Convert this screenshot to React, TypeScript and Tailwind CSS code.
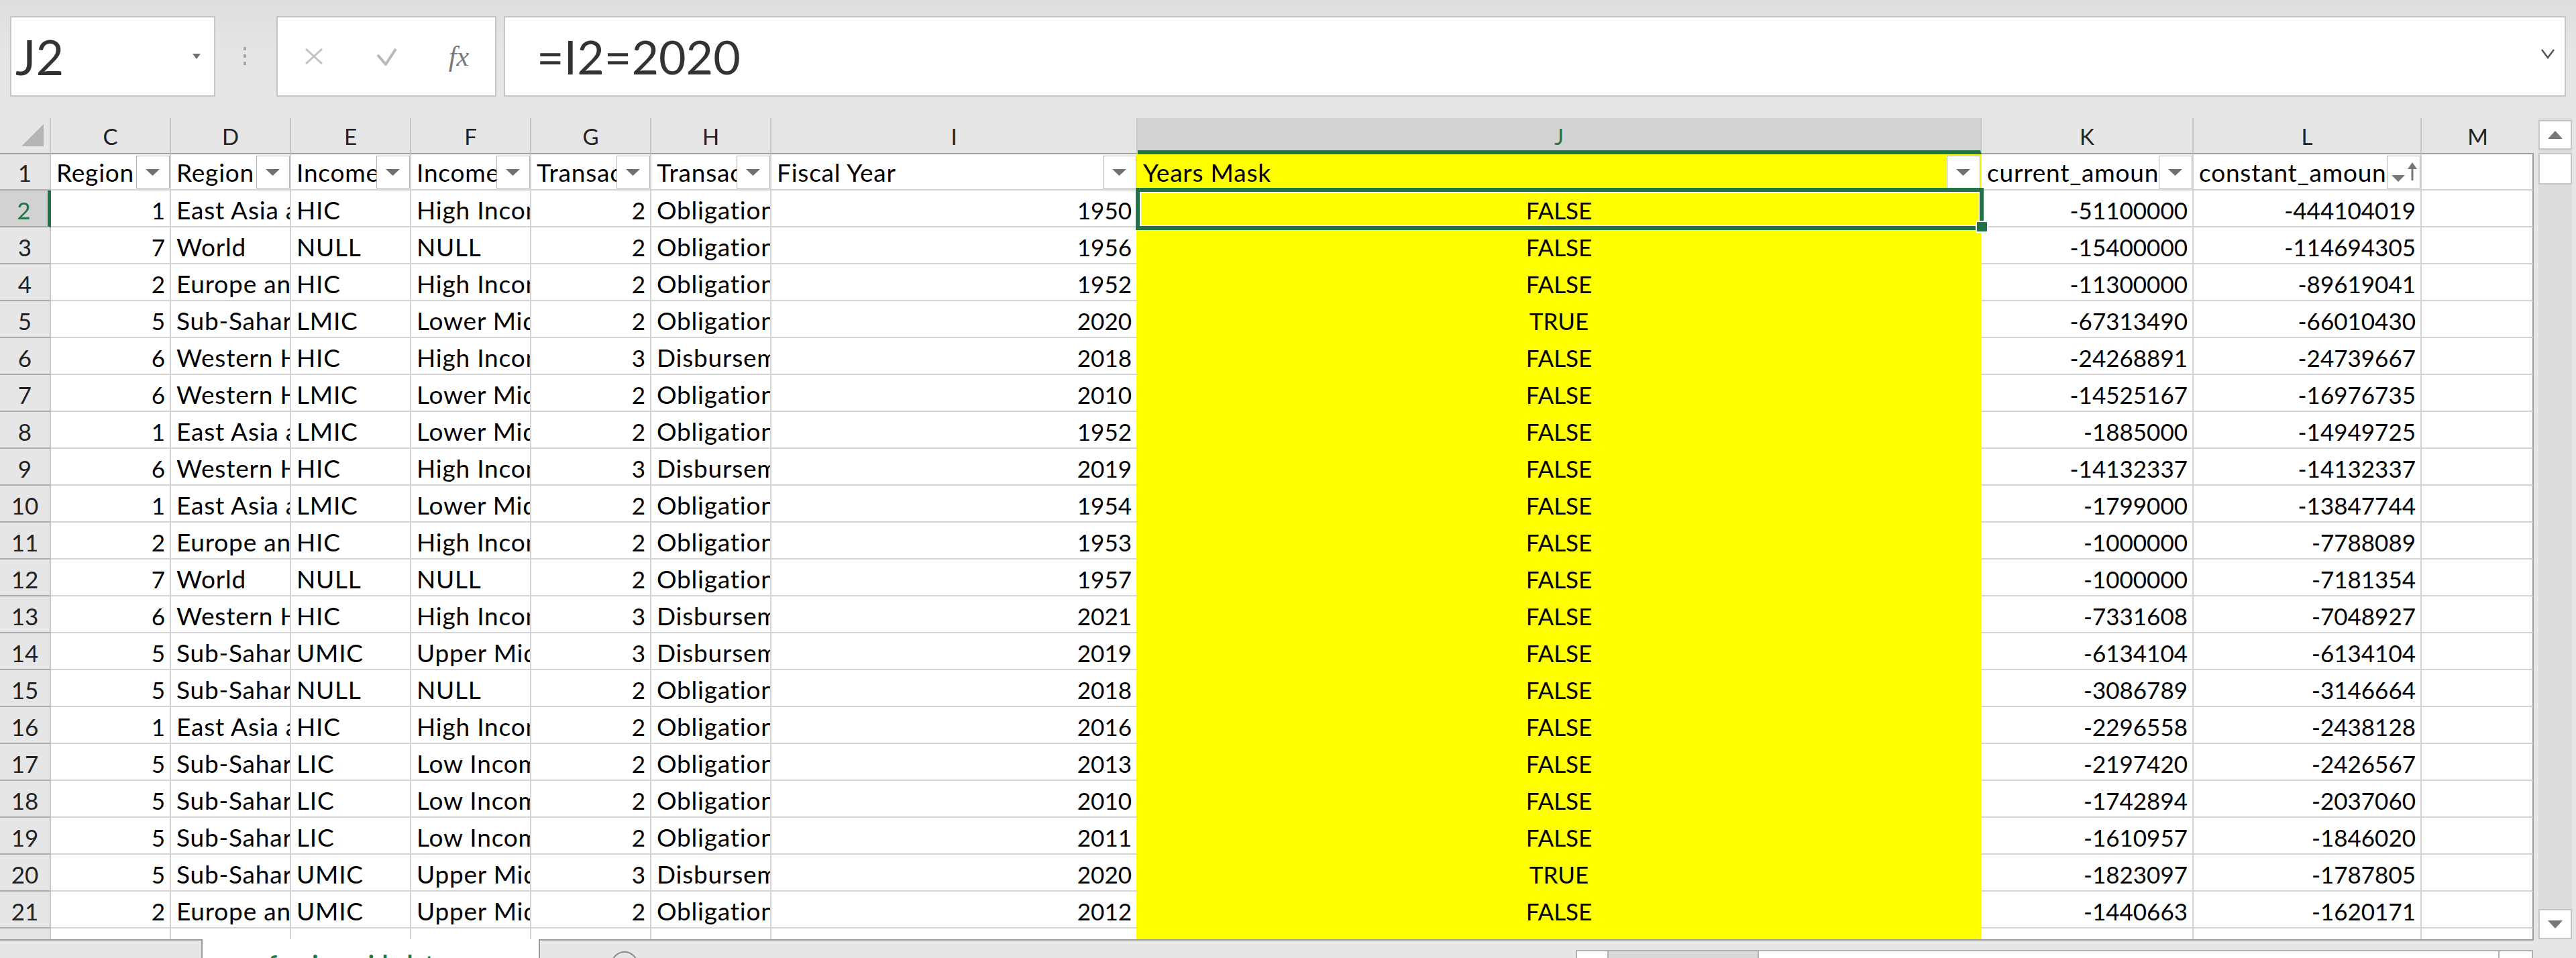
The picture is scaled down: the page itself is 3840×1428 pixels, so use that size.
import React from "react";

type Align = "left" | "right" | "center";

type Column = {
  id: string;
  w: string;
  align: Align;
  title: string;
};

const columns: Column[] = [
  { id: "C", w: "w-[179px]", align: "right", title: "Region ID" },
  { id: "D", w: "w-[179px]", align: "left", title: "Region Name" },
  { id: "E", w: "w-[179px]", align: "left", title: "Income Group Acronym" },
  { id: "F", w: "w-[179px]", align: "left", title: "Income Group Name" },
  { id: "G", w: "w-[179px]", align: "right", title: "Transaction Type ID" },
  { id: "H", w: "w-[179px]", align: "left", title: "Transaction Type Name" },
  { id: "I", w: "w-[546px]", align: "right", title: "Fiscal Year" },
  { id: "J", w: "w-[1258px]", align: "center", title: "Years Mask" },
  { id: "K", w: "w-[316px]", align: "right", title: "current_amount" },
  { id: "L", w: "w-[340px]", align: "right", title: "constant_amount" },
  { id: "M", w: "w-[167px]", align: "left", title: "" },
];

const EA = "East Asia and Pacific";
const EU = "Europe and Eurasia";
const SSA = "Sub-Saharan Africa";
const WH = "Western Hemisphere";
const OB = "Obligations";
const DI = "Disbursements";

// C..L for rows 2..22
const rows: string[][] = [
  ["1", EA, "HIC", "High Income", "2", OB, "1950", "FALSE", "-51100000", "-444104019"],
  ["7", "World", "NULL", "NULL", "2", OB, "1956", "FALSE", "-15400000", "-114694305"],
  ["2", EU, "HIC", "High Income", "2", OB, "1952", "FALSE", "-11300000", "-89619041"],
  ["5", SSA, "LMIC", "Lower Middle Income", "2", OB, "2020", "TRUE", "-67313490", "-66010430"],
  ["6", WH, "HIC", "High Income", "3", DI, "2018", "FALSE", "-24268891", "-24739667"],
  ["6", WH, "LMIC", "Lower Middle Income", "2", OB, "2010", "FALSE", "-14525167", "-16976735"],
  ["1", EA, "LMIC", "Lower Middle Income", "2", OB, "1952", "FALSE", "-1885000", "-14949725"],
  ["6", WH, "HIC", "High Income", "3", DI, "2019", "FALSE", "-14132337", "-14132337"],
  ["1", EA, "LMIC", "Lower Middle Income", "2", OB, "1954", "FALSE", "-1799000", "-13847744"],
  ["2", EU, "HIC", "High Income", "2", OB, "1953", "FALSE", "-1000000", "-7788089"],
  ["7", "World", "NULL", "NULL", "2", OB, "1957", "FALSE", "-1000000", "-7181354"],
  ["6", WH, "HIC", "High Income", "3", DI, "2021", "FALSE", "-7331608", "-7048927"],
  ["5", SSA, "UMIC", "Upper Middle Income", "3", DI, "2019", "FALSE", "-6134104", "-6134104"],
  ["5", SSA, "NULL", "NULL", "2", OB, "2018", "FALSE", "-3086789", "-3146664"],
  ["1", EA, "HIC", "High Income", "2", OB, "2016", "FALSE", "-2296558", "-2438128"],
  ["5", SSA, "LIC", "Low Income", "2", OB, "2013", "FALSE", "-2197420", "-2426567"],
  ["5", SSA, "LIC", "Low Income", "2", OB, "2010", "FALSE", "-1742894", "-2037060"],
  ["5", SSA, "LIC", "Low Income", "2", OB, "2011", "FALSE", "-1610957", "-1846020"],
  ["5", SSA, "UMIC", "Upper Middle Income", "3", DI, "2020", "TRUE", "-1823097", "-1787805"],
  ["2", EU, "UMIC", "Upper Middle Income", "2", OB, "2012", "FALSE", "-1440663", "-1620171"],
  ["1", EA, "LMIC", "Lower Middle Income", "2", OB, "2014", "FALSE", "-1400000", "-1556000"],
];

// Calibri's lowercase runs wider than Lato's, digits don't: words get a bit more room
const alignClass: Record<Align, string> = {
  left: "text-left pl-[8px] text-[37px] tracking-[0.8px]",
  right: "text-right pr-[7px] text-[35px]",
  center: "text-center text-[35px]",
};

// border colour per column: J is filled yellow, I's right gridline is hidden by the fill
function cellBorder(id: string) {
  if (id === "J") return "bg-[#ffff00] border-r-2 border-b-2 border-[#ffff00]";
  if (id === "I") return "bg-white border-r-2 border-b-2 border-[#d4d4d4] border-r-[#ffff00]";
  if (id === "M") return "bg-white border-r-2 border-b-2 border-[#d4d4d4] border-r-[#9c9c9c]";
  return "bg-white border-r-2 border-b-2 border-[#d4d4d4]";
}

function FilterButton({ sorted }: { sorted?: boolean }) {
  return (
    <div className="mt-[2px] flex h-[49px] w-[50px] shrink-0 items-center justify-center border border-[#b4b4b4] bg-white">
      <svg width="48" height="47" viewBox="0 0 48 47">
        {sorted ? (
          <>
            <polygon points="6,28 26,28 16,38" fill="#777777" />
            <polygon points="30,19 44,19 37,9" fill="#777777" />
            <rect x="35.5" y="18" width="3" height="18" fill="#777777" />
          </>
        ) : (
          <polygon points="13,19 34,19 23.5,29" fill="#707070" />
        )}
      </svg>
    </div>
  );
}

function FormulaBar() {
  return (
    <div className="flex h-[176px] items-start bg-gradient-to-b from-[#dedede] via-[#e6e6e6] to-[#e6e6e6] pt-[24px]">
      {/* name box */}
      <div className="ml-[15px] flex h-[120px] w-[306px] items-center border-2 border-[#c6c6c6] bg-white pl-[6px] pr-[20px]">
        <span className="flex-1 text-[72px] leading-none text-[#333333]">J2</span>
        <svg width="12" height="8" viewBox="0 0 12 8">
          <polygon points="0,0 12,0 6,8" fill="#707070" />
        </svg>
      </div>

      <div className="ml-[42px] mt-[46px] flex flex-col gap-[6px]">
        <div className="h-[5px] w-[4px] bg-[#a8a8a8]" />
        <div className="h-[5px] w-[4px] bg-[#a8a8a8]" />
        <div className="h-[5px] w-[4px] bg-[#a8a8a8]" />
      </div>

      {/* cancel / enter / fx */}
      <div className="ml-[45px] flex h-[120px] w-[328px] items-center border-2 border-[#c6c6c6] bg-white">
        <div className="flex w-[108px] justify-center">
          <svg width="30" height="26" viewBox="0 0 30 26">
            <line x1="3" y1="2" x2="27" y2="24" stroke="#c2c2c2" strokeWidth="3" />
            <line x1="27" y1="2" x2="3" y2="24" stroke="#c2c2c2" strokeWidth="3" />
          </svg>
        </div>
        <div className="flex w-[108px] justify-center">
          <svg width="34" height="28" viewBox="0 0 34 28">
            <polyline points="4,12 16,26 31,3" fill="none" stroke="#b8b8b8" strokeWidth="4" strokeLinejoin="round" />
          </svg>
        </div>
        <div className="flex w-[108px] justify-center">
          <span className="font-['Liberation_Serif',serif] text-[42px] italic leading-none text-[#7a7a7a]">fx</span>
        </div>
      </div>

      {/* formula input */}
      <div className="ml-[11px] mr-[15px] flex h-[120px] flex-1 items-center border-2 border-[#c6c6c6] bg-white pl-[47px] pr-[14px]">
        <span className="flex-1 text-[70px] leading-none text-[#333333]">=I2=2020</span>
        <svg width="22" height="16" viewBox="0 0 22 16" className="-mt-[8px]">
          <polyline points="2,2 11,14 20,2" fill="none" stroke="#555555" strokeWidth="2.5" />
        </svg>
      </div>
    </div>
  );
}

function ColumnHeader() {
  return (
    <div className="flex h-[54px] shrink-0 bg-[#e6e6e6]">
      <div className="relative h-full w-[76px] shrink-0 border-r-2 border-b-2 border-[#c6c6c6] border-b-[#a0a0a0]">
        <svg width="34" height="34" viewBox="0 0 34 34" className="ml-[32px] mt-[9px]">
          <polygon points="33,0 33,33 0,33" fill="#b4b4b4" />
        </svg>
      </div>
      {columns.map((c) => (
        <div
          key={c.id}
          className={`${c.w} h-full shrink-0 pt-[7px] text-center text-[33px] leading-[40px] ${
            c.id === "J"
              ? "border-r-2 border-b-[6px] border-[#c6c6c6] border-b-[#217346] bg-[#d2d2d2] text-[#217346]"
              : c.id === "M"
                ? "border-b-2 border-[#a0a0a0] text-[#222222]"
                : "border-r-2 border-b-2 border-[#c6c6c6] border-b-[#a0a0a0] text-[#222222]"
          }`}
        >
          {c.id}
        </div>
      ))}
    </div>
  );
}

function RowHeader({ n, active }: { n: number; active?: boolean }) {
  return (
    <div
      className={`h-full w-[76px] shrink-0 border-b-2 border-[#ababab] text-center text-[35px] leading-[42px] ${
        n === 1 ? "pt-[6px]" : "pt-[8px]"
      } ${
        active
          ? "border-r-[5px] border-r-[#217346] bg-[#d2d2d2] text-[#217346]"
          : "border-r-2 border-r-[#c6c6c6] bg-[#e6e6e6] text-[#222222]"
      }`}
    >
      {n}
    </div>
  );
}

function TitleRow() {
  return (
    <div className="flex h-[54px] shrink-0">
      <RowHeader n={1} />
      {columns.map((c) => (
        <div key={c.id} className={`${c.w} ${cellBorder(c.id)} flex h-full shrink-0`}>
          <div className="min-w-0 flex-1 overflow-hidden whitespace-nowrap pl-[8px] pt-[6px] text-[37px] leading-[42px] tracking-[0.8px] text-black">
            {c.title}
          </div>
          {c.id !== "M" && <FilterButton sorted={c.id === "L"} />}
        </div>
      ))}
    </div>
  );
}

function DataRow({ n, values }: { n: number; values: string[] }) {
  return (
    <div className="flex h-[55px] shrink-0">
      <RowHeader n={n} active={n === 2} />
      {columns.map((c, i) => (
        <div
          key={c.id}
          className={`${c.w} ${cellBorder(c.id)} ${alignClass[c.align]} h-full shrink-0 overflow-hidden whitespace-nowrap pt-[8px] leading-[42px] text-black`}
        >
          {values[i] ?? ""}
        </div>
      ))}
    </div>
  );
}

function VerticalScrollbar() {
  return (
    <div className="ml-[7px] flex h-full w-[50px] flex-col bg-[#dcdcdc]">
      <div className="mt-[3px] flex h-[44px] items-center justify-center border-2 border-[#c6c6c6] bg-white">
        <svg width="22" height="12" viewBox="0 0 22 12">
          <polygon points="0,12 22,12 11,0" fill="#777777" />
        </svg>
      </div>
      <div className="mt-[5px] h-[47px] border-2 border-[#c6c6c6] bg-white" />
      <div className="flex-1" />
      <div className="flex h-[45px] items-center justify-center border-2 border-[#c6c6c6] bg-white">
        <svg width="22" height="12" viewBox="0 0 22 12">
          <polygon points="0,0 22,0 11,12" fill="#777777" />
        </svg>
      </div>
    </div>
  );
}

function SheetBar() {
  return (
    <div className="flex h-[28px] shrink-0 items-start bg-[#e6e6e6]">
      <div className="h-full w-[302px] shrink-0 border-t-2 border-r-2 border-[#9c9c9c]" />
      <div className="h-full w-[501px] shrink-0 overflow-hidden bg-white pl-[98px] pt-[18px]">
        <span className="whitespace-nowrap text-[36px] font-bold leading-none text-[#217346]">foreign_aid_data</span>
      </div>
      <div className="flex h-full w-[2974px] shrink-0 items-start border-t-2 border-l-2 border-[#9c9c9c]">
        <div className="ml-[106px] mt-[16px] h-[40px] w-[40px] shrink-0 rounded-full border-2 border-[#8a8a8a]" />
        <div className="ml-[1398px] mt-[14px] flex h-[30px] w-[1427px] shrink-0">
          <div className="h-full w-[49px] border-2 border-[#b0b0b0] bg-white" />
          <div className="h-full w-[222px] border-t-2 border-[#b0b0b0] bg-[#d9d9d9]" />
          <div className="h-full flex-1 border-2 border-[#b0b0b0] bg-white" />
          <div className="h-full w-[50px] border-2 border-l-0 border-[#b0b0b0] bg-white" />
        </div>
      </div>
    </div>
  );
}

export default function App() {
  return (
    <div className="flex h-[1428px] w-[3840px] flex-col overflow-hidden bg-[#e6e6e6] font-['Lato',sans-serif]">
      <FormulaBar />
      <div className="flex h-[1224px] shrink-0">
        <div className="relative flex h-full w-[3777px] shrink-0 flex-col overflow-hidden bg-white">
          <ColumnHeader />
          <TitleRow />
          {rows.map((r, i) => (
            <DataRow key={i} n={i + 2} values={r} />
          ))}
          {/* active cell J2 */}
          <div className="absolute left-[1693px] top-[104px] h-[63px] w-[1264px] border-[6px] border-[#217346]">
            <div className="h-full w-full border-2 border-white" />
          </div>
          <div className="absolute left-[2945px] top-[153px] h-[18px] w-[19px] border-2 border-white bg-[#217346]" />
        </div>
        <VerticalScrollbar />
      </div>
      <SheetBar />
    </div>
  );
}
